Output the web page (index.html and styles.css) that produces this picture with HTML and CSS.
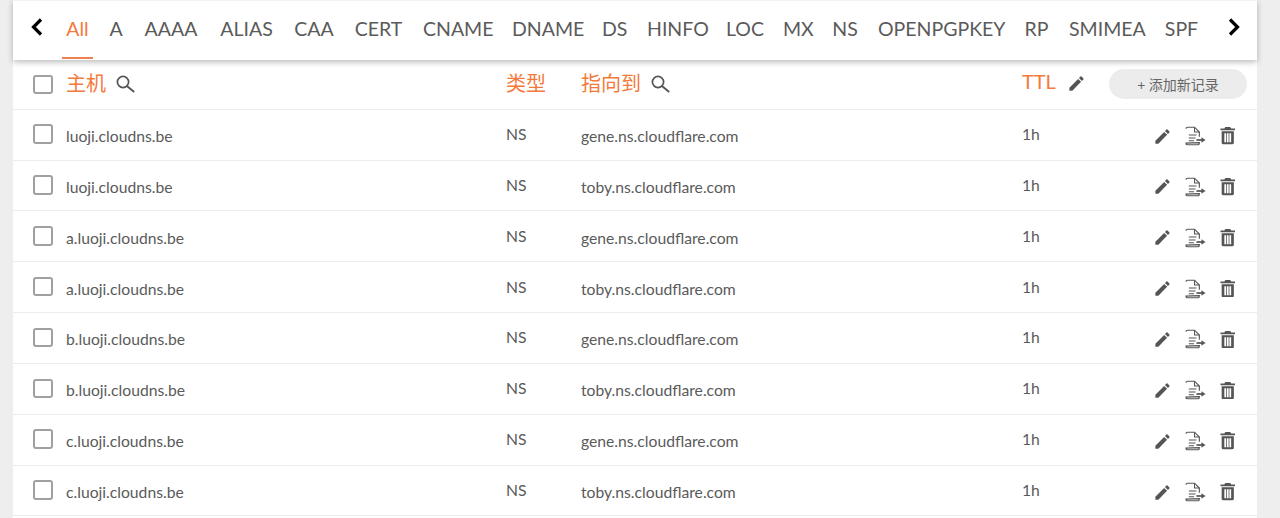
FILE: index.html
```html
<!DOCTYPE html>
<html lang="zh">
<head>
<meta charset="utf-8">
<title>DNS records</title>
<link rel="stylesheet" href="styles.css">
</head>
<body>
<svg class="defs" width="0" height="0" aria-hidden="true">
  <symbol id="i-search" viewBox="0 0 20 20"><circle cx="8" cy="8" r="5.6" fill="none" stroke="currentColor" stroke-width="1.7"/><path d="M12.2 12.2 18.6 17.6" fill="none" stroke="currentColor" stroke-width="1.9" stroke-linecap="round"/></symbol>
  <symbol id="i-edit" viewBox="0 0 24 24"><path fill="currentColor" d="M3 17.25V21h3.75L17.81 9.94l-3.75-3.75L3 17.25zM20.71 7.04a1 1 0 0 0 0-1.41l-2.34-2.34a1 1 0 0 0-1.41 0l-1.83 1.83 3.75 3.75 1.83-1.83z"/></symbol>
  <symbol id="i-del" viewBox="0 0 16 18"><path fill="currentColor" fill-rule="evenodd" d="M5.5 0h5l1 1.4H15.500V3.400H.5V1.400H4.500zM1.700 4.400H14.300V16.200A1.800 1.800 0 0 1 12.500 18H3.500A1.800 1.800 0 0 1 1.700 16.200zM4.500 6.500V15.800H6.300V6.500zM7.100 6.500V15.800H8.900V6.500zM9.700 6.500V15.800H11.500V6.500z"/></symbol>
  <symbol id="i-doc" viewBox="0 0 22 20"><path d="M1 2.400A1.700 1.700 0 0 1 2.700.8H10L15 5.800V10.800M15 17V17.500A1.700 1.700 0 0 1 13.300 19.200H2.700A1.700 1.700 0 0 1 1 17.500Z" fill="none" stroke="currentColor" stroke-width="1.200"/><path d="M10 1V5.800H15M4 9H12M4 12H11M4 15H9.500" fill="none" stroke="currentColor" stroke-width="1.100"/><path d="M12 14.200H18" fill="none" stroke="currentColor" stroke-width="1.800"/><path d="M17.200 11.200 21.500 14.200 17.200 17.200Z" fill="currentColor"/></symbol>
</svg>
<main class="card">
  <nav class="tabs">
    <svg class="arrow" viewBox="0 0 16 20" aria-hidden="true"><path d="M12 2.500 4.500 10 12 17.500" fill="none" stroke="currentColor" stroke-width="3.200"/></svg>
    <div class="tab-list">
      <a class="tab active">All</a><a class="tab">A</a><a class="tab">AAAA</a><a class="tab">ALIAS</a><a class="tab">CAA</a><a class="tab">CERT</a><a class="tab">CNAME</a><a class="tab">DNAME</a><a class="tab">DS</a><a class="tab">HINFO</a><a class="tab">LOC</a><a class="tab">MX</a><a class="tab">NS</a><a class="tab">OPENPGPKEY</a><a class="tab">RP</a><a class="tab">SMIMEA</a><a class="tab">SPF</a>
    </div>
    <svg class="arrow next" viewBox="0 0 16 20" aria-hidden="true"><path d="M4 2.500 11.500 10 4 17.500" fill="none" stroke="currentColor" stroke-width="3.200"/></svg>
  </nav>
  <section class="table">
    <div class="row head">
      <span class="check"></span>
      <div class="h-cell"><span>主机</span><svg class="ic-search"><use href="#i-search"/></svg></div>
      <div class="h-cell"><span>类型</span></div>
      <div class="h-cell"><span>指向到</span><svg class="ic-search"><use href="#i-search"/></svg></div>
      <div class="h-cell ttl"><span class="ttl-label">TTL</span><svg class="ic-edit head-edit"><use href="#i-edit"/></svg></div>
      <button class="add">+ 添加新记录</button>
    </div>
    <div class="row"><span class="check"></span><span class="host">luoji.cloudns.be</span><span class="up">NS</span><span class="host">gene.ns.cloudflare.com</span><span class="up">1h</span><div class="acts"><svg class="ic-edit"><use href="#i-edit"/></svg><svg class="ic-doc"><use href="#i-doc"/></svg><svg class="ic-del"><use href="#i-del"/></svg></div></div>
    <div class="row"><span class="check"></span><span class="host">luoji.cloudns.be</span><span class="up">NS</span><span class="host">toby.ns.cloudflare.com</span><span class="up">1h</span><div class="acts"><svg class="ic-edit"><use href="#i-edit"/></svg><svg class="ic-doc"><use href="#i-doc"/></svg><svg class="ic-del"><use href="#i-del"/></svg></div></div>
    <div class="row"><span class="check"></span><span class="host">a.luoji.cloudns.be</span><span class="up">NS</span><span class="host">gene.ns.cloudflare.com</span><span class="up">1h</span><div class="acts"><svg class="ic-edit"><use href="#i-edit"/></svg><svg class="ic-doc"><use href="#i-doc"/></svg><svg class="ic-del"><use href="#i-del"/></svg></div></div>
    <div class="row"><span class="check"></span><span class="host">a.luoji.cloudns.be</span><span class="up">NS</span><span class="host">toby.ns.cloudflare.com</span><span class="up">1h</span><div class="acts"><svg class="ic-edit"><use href="#i-edit"/></svg><svg class="ic-doc"><use href="#i-doc"/></svg><svg class="ic-del"><use href="#i-del"/></svg></div></div>
    <div class="row"><span class="check"></span><span class="host">b.luoji.cloudns.be</span><span class="up">NS</span><span class="host">gene.ns.cloudflare.com</span><span class="up">1h</span><div class="acts"><svg class="ic-edit"><use href="#i-edit"/></svg><svg class="ic-doc"><use href="#i-doc"/></svg><svg class="ic-del"><use href="#i-del"/></svg></div></div>
    <div class="row"><span class="check"></span><span class="host">b.luoji.cloudns.be</span><span class="up">NS</span><span class="host">toby.ns.cloudflare.com</span><span class="up">1h</span><div class="acts"><svg class="ic-edit"><use href="#i-edit"/></svg><svg class="ic-doc"><use href="#i-doc"/></svg><svg class="ic-del"><use href="#i-del"/></svg></div></div>
    <div class="row"><span class="check"></span><span class="host">c.luoji.cloudns.be</span><span class="up">NS</span><span class="host">gene.ns.cloudflare.com</span><span class="up">1h</span><div class="acts"><svg class="ic-edit"><use href="#i-edit"/></svg><svg class="ic-doc"><use href="#i-doc"/></svg><svg class="ic-del"><use href="#i-del"/></svg></div></div>
    <div class="row"><span class="check"></span><span class="host">c.luoji.cloudns.be</span><span class="up">NS</span><span class="host">toby.ns.cloudflare.com</span><span class="up">1h</span><div class="acts"><svg class="ic-edit"><use href="#i-edit"/></svg><svg class="ic-doc"><use href="#i-doc"/></svg><svg class="ic-del"><use href="#i-del"/></svg></div></div>
  </section>
</main>
</body>
</html>
```
FILE: styles.css
```css
* { box-sizing: border-box; }
html, body { margin: 0; height: 518px; overflow: hidden; }
body {
  background: #eeeeee;
  font-family: "Lato", "Noto Sans CJK SC", sans-serif;
  color: #5a5a5a;
}
.defs { position: absolute; }
.card { margin: 0 23px 0 13px; min-height: 518px; background: #fff; }
.tabs {
  position: relative;
  z-index: 1;
  height: 60px;
  display: flex;
  align-items: flex-start;
  background: #fff;
  border-top: 1px solid #f2f2f2;
  box-shadow: 0 2px 6px rgba(0, 0, 0, 0.28);
}
.arrow { flex: none; width: 16px; height: 20px; margin: 16px 0 0 16px; color: #000; }
.arrow.next { margin: 16px 15px 0 0; }
.tab-list {
  flex: 1;
  min-width: 0;
  display: grid;
  grid-template-columns: 23px 14px 56px 55px 40px 49px 69px 70px 25px 59px 37px 29px 26px 126px 25px 75px 35px;
  column-gap: 20px;
  margin-left: 21px;
}
.tab {
  height: 58px;
  padding-top: 14px;
  font-size: 19.5px;
  line-height: 27px;
  text-align: center;
  color: #5a5a5a;
  white-space: nowrap;
}
.tab.active {
  color: #f37a3a;
  box-shadow: inset 0 -2px 0 #f08050;
  margin: 0 -4px;
  padding: 14px 4px 0;
}
.row {
  display: grid;
  grid-template-columns: 33px 440px 75px 441px 131px 1fr;
  height: 50.85px;
  padding: 3px 0 0 20px;
  align-items: center;
  border-bottom: 1px solid #ececec;
  font-size: 15.7px;
}
.head { height: 49.7px; padding-top: 0; }
.check {
  width: 19.5px;
  height: 19.5px;
  margin-top: -4px;
  border: 2px solid #a0a0a0;
  border-radius: 3px;
  background: #fff;
}
.head .check { margin-top: 0; }
.h-cell {
  display: flex;
  align-items: center;
  gap: 9px;
  font-size: 20px;
  color: #f37a3a;
  margin-top: -3px;
}
.ttl { gap: 11px; }
.ttl-label { margin-top: -3px; }
.ic-search { flex: none; width: 20px; height: 20px; color: #555; margin-top: 2px; }
.ic-edit { flex: none; width: 19px; height: 19px; color: #555; }
.head-edit { margin-top: 2px; }
.add {
  width: 138px;
  height: 30px;
  margin-left: -44px;
  border: 0;
  border-radius: 15px;
  background: #ececec;
  color: #666;
  font: 14px "Lato", "Noto Sans CJK SC", sans-serif;
}
.host { color: #5a5a5a; }
.up { margin-top: -4px; color: #5a5a5a; }
.acts {
  display: flex;
  align-items: center;
  justify-self: start;
  gap: 13px;
  color: #555;
}
.ic-doc { width: 21px; height: 20px; }
.ic-del { width: 15.5px; height: 17.5px; margin-left: 1px; }
```
